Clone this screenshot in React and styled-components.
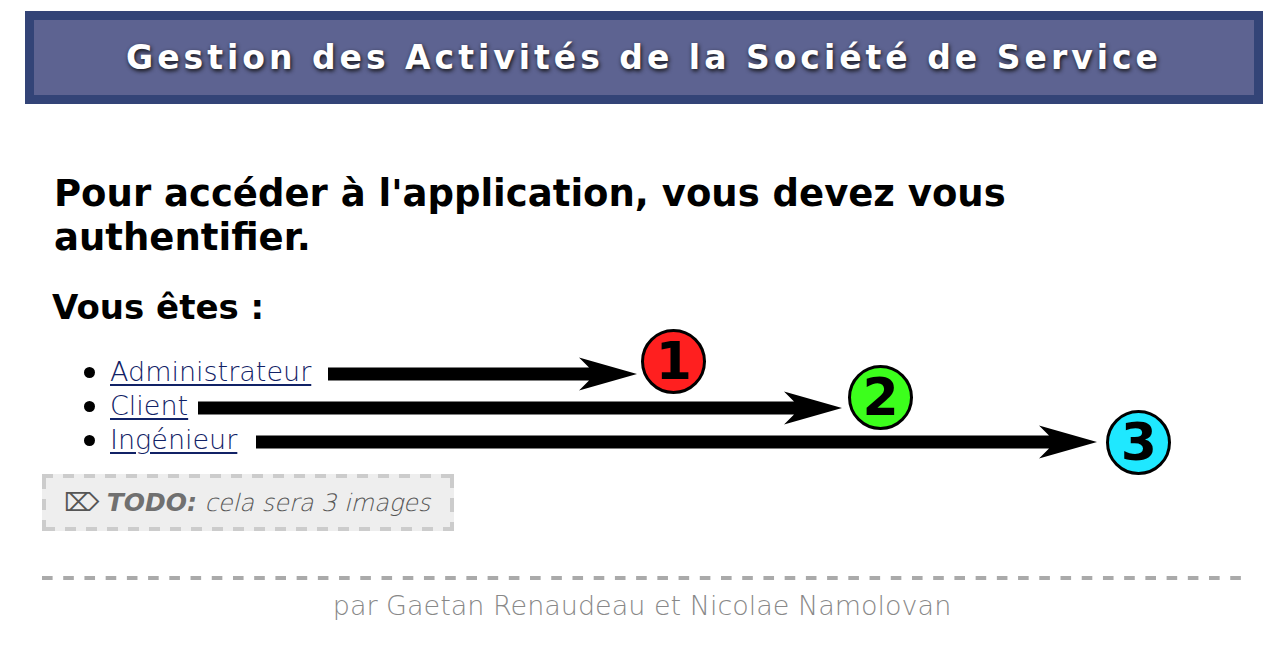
import React from "react";
import styled, { createGlobalStyle } from "styled-components";

const GlobalStyle = createGlobalStyle`
  *, *::before { box-sizing: border-box; }
  body {
    margin: 0;
    background: #fff;
    color: #000;
    font-family: "DejaVu Sans", sans-serif;
  }
`;

const light = `
  font-family: "DejaVu Sans Light", "DejaVu Sans", sans-serif;
  font-weight: 200;
`;

const Page = styled.div`
  padding: 11px 14px 0 25px;
`;

const Banner = styled.header`
  border: 9px solid #334477;
  background: #5d6391;
  padding: 18px 0;
  text-align: center;
`;

const Title = styled.h1`
  margin: 0;
  color: #fff;
  font-size: 33px;
  line-height: 39px;
  letter-spacing: 4px;
  text-shadow: 1px 2px 4px #111;
`;

const Main = styled.main`
  padding: 68px 21px 0 17px;
`;

const Lead = styled.h2`
  margin: 0;
  padding-left: 12px;
  font-size: 37px;
  line-height: 44px;
`;

const Question = styled.h3`
  margin: 25px 0 0;
  padding-left: 10px;
  font-size: 34px;
  line-height: 44px;
`;

const Roles = styled.ul`
  list-style: none;
  margin: 26px 0 0;
  padding: 0 0 0 42px;
`;

const Role = styled.li`
  display: flex;
  align-items: center;
  height: 34px;

  &::before {
    content: "";
    width: 11px;
    height: 11px;
    margin-right: 15px;
    border-radius: 50%;
    background: #000;
  }
`;

const RoleLink = styled.a`
  ${light}
  color: #112266;
  font-size: 27px;
  line-height: 34px;
  text-decoration-thickness: 2px;
  text-underline-offset: 3px;
`;

const ArrowDrawing = styled.svg`
  flex: none;
  display: block;
  margin: 4px ${(p) => p.$after}px 0 ${(p) => p.$before}px;
`;

const Badge = styled.span`
  flex: none;
  display: flex;
  align-items: center;
  justify-content: center;
  width: 65px;
  height: 65px;
  margin-top: ${(p) => -2 * p.$lift}px;
  border: 3px solid #000;
  border-radius: 50%;
  background: ${(p) => p.$color};
  font-size: 52px;
  font-weight: 700;
  line-height: 60px;
`;

const Todo = styled.p`
  ${light}
  display: inline-block;
  margin: 17px 0 0;
  padding: 12px 24px 11px 22px;
  background:
    repeating-linear-gradient(90deg, #ccc 0 11px, transparent 11px 21px) top left / 100% 4px no-repeat,
    repeating-linear-gradient(270deg, #ccc 0 11px, transparent 11px 21px) bottom right / 100% 4px no-repeat,
    repeating-linear-gradient(0deg, #ccc 0 11px, transparent 11px 21px) bottom left / 4px 100% no-repeat,
    repeating-linear-gradient(180deg, #ccc 0 14px, transparent 14px 24px) top right / 4px 100% no-repeat,
    #eee;
  color: #555;
  font-style: italic;
  font-size: 24px;
  line-height: 34px;
`;

const Mark = styled.span`
  font-style: normal;
  font-size: 25px;
  line-height: 1;
`;

const TodoLabel = styled.strong`
  color: #707070;
  font-family: "DejaVu Sans", sans-serif;
  font-weight: 700;
  font-size: 25px;
  line-height: 1;
`;

const Footer = styled.footer`
  ${light}
  margin: 45px 21px 0 17px;
  color: #888;
  font-size: 27px;
  line-height: 34px;
  text-align: center;

  &::before {
    content: "";
    display: block;
    height: 4px;
    margin-bottom: 9px;
    background: linear-gradient(90deg, #aaa 52%, transparent 52%) 0 0 /
      calc((100% + 10px) / 57) 100% repeat-x;
  }
`;

function Arrow({ length, before, after }) {
  return (
    <ArrowDrawing
      $before={before}
      $after={after}
      width={length}
      height="34"
      viewBox={`0 0 ${length} 34`}
      aria-hidden="true"
    >
      <path
        d={`M0 10.5H${length - 48}L${length - 58} 0.5L${length} 17L${length - 58} 33.5L${length - 48} 23.5H0Z`}
      />
    </ArrowDrawing>
  );
}

const roles = [
  { name: "Administrateur", before: 17, length: 309, after: 4, color: "#ff1f1f", lift: 11 },
  { name: "Client", before: 10, length: 644, after: 6, color: "#3cff1c", lift: 9 },
  { name: "Ingénieur", before: 19, length: 841, after: 9, color: "#1fe8ff", lift: -2 },
];

export default function App() {
  return (
    <>
      <GlobalStyle />
      <Page>
        <Banner>
          <Title>Gestion des Activités de la Société de Service</Title>
        </Banner>
        <Main>
          <Lead>Pour accéder à l'application, vous devez vous authentifier.</Lead>
          <Question>Vous êtes :</Question>
          <Roles>
            {roles.map((role, i) => (
              <Role key={role.name}>
                <RoleLink href="#">{role.name}</RoleLink>
                <Arrow length={role.length} before={role.before} after={role.after} />
                <Badge $color={role.color} $lift={role.lift}>
                  {i + 1}
                </Badge>
              </Role>
            ))}
          </Roles>
          <Todo>
            <Mark>⌦</Mark> <TodoLabel>TODO:</TodoLabel> cela sera 3 images
          </Todo>
        </Main>
        <Footer>par Gaetan Renaudeau et Nicolae Namolovan</Footer>
      </Page>
    </>
  );
}
